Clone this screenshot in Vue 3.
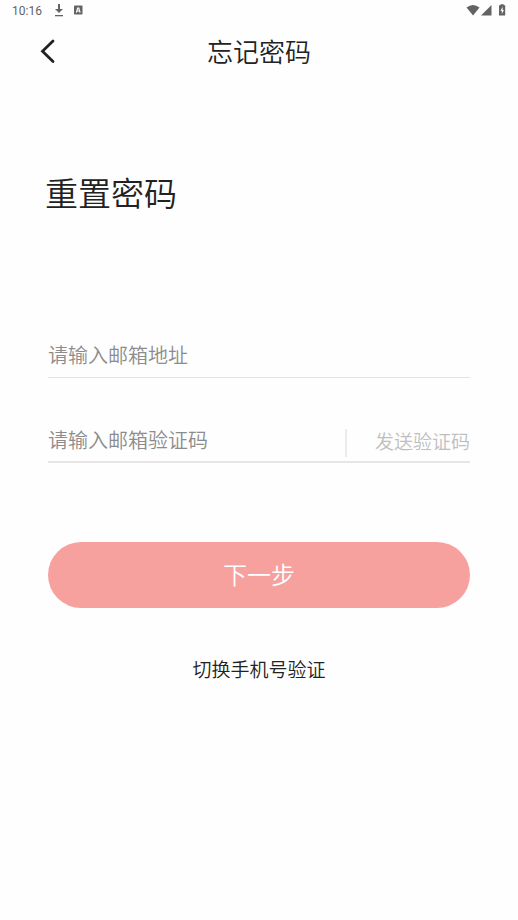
<script setup>
import { ref } from 'vue'

const email = ref('')
const code = ref('')
</script>

<template>
  <div class="screen">
    <div class="status">
      <span class="clock">10:16</span>
      <svg class="download" width="10" height="14" viewBox="0 0 10 14" aria-hidden="true">
        <path d="M4 1h2v5h3L5 10 1 6h3z" />
        <path d="M1 12h8v1.3H1z" />
      </svg>
      <svg class="badge" width="10" height="10" viewBox="0 0 10 10" aria-hidden="true">
        <rect x="1" y="0.5" width="8.5" height="9" rx="0.8" />
        <path d="M3.4 7.6 4.7 3h1.1l1.3 4.6M4 6h2.6" fill="none" stroke="#fff" stroke-width="1.2" />
      </svg>
      <svg class="signals" width="40" height="14" viewBox="0 0 40 14" aria-hidden="true">
        <path d="M0.5 4.6Q7 -0.8 13.5 4.6L7 12.6z" />
        <path d="M15 12.5 25.5 2v10.5z" />
        <path d="M34.5 1.2h3.2v1h1.5v10.4H33V2.2h1.5z" />
        <path d="M36.8 3.8 34.3 7.7h1.5v3.2L38 6.9h-1.4z" fill="#fff" />
      </svg>
    </div>

    <header class="bar">
      <button class="back" type="button" aria-label="返回">
        <svg width="16" height="26" viewBox="0 0 16 26" aria-hidden="true">
          <path d="M13 3 2.5 13.2 13 23.5" fill="none" stroke="#222" stroke-width="2.8" stroke-linecap="round" />
        </svg>
      </button>
      <h1 class="title">忘记密码</h1>
    </header>

    <main class="content">
      <h2 class="heading">重置密码</h2>
      <form class="form" @submit.prevent>
        <div class="field">
          <input v-model="email" class="input" type="email" placeholder="请输入邮箱地址" aria-label="请输入邮箱地址" />
        </div>
        <div class="field field-code">
          <input v-model="code" class="input" type="text" placeholder="请输入邮箱验证码" aria-label="请输入邮箱验证码" />
          <button class="send" type="button">发送验证码</button>
        </div>
        <button class="next" type="submit">下一步</button>
      </form>
      <a class="switch" href="#">切换手机号验证</a>
    </main>
  </div>
</template>

<style>
body {
  background: #fefefe;
}
</style>

<style scoped>
* {
  box-sizing: border-box;
}

.screen {
  min-height: 100vh;
  color: #222;
  font-family: "Noto Sans CJK SC", sans-serif;
  font-weight: 350;
}

.status {
  display: flex;
  align-items: center;
  height: 20px;
  padding: 0 12px;
  fill: #636363;
}

.clock {
  padding-top: 1px;
  color: #636363;
  font: 12px/20px Roboto, sans-serif;
}

.download {
  margin-left: 12px;
}

.badge {
  margin-left: 9px;
}

.signals {
  margin-left: auto;
}

.bar {
  display: grid;
  grid-template-columns: 1fr auto 1fr;
  align-items: center;
  height: 62px;
  padding: 0 40px;
}

button {
  padding: 0;
  border: 0;
  background: none;
  font-family: inherit;
  font-weight: inherit;
}

.back {
  display: flex;
  justify-self: start;
}

.title {
  margin: 0;
  font-size: 26px;
  font-weight: inherit;
  line-height: 40px;
}

.content {
  display: flex;
  flex-direction: column;
  padding: 86px 48px 0;
}

.heading {
  margin: 0 -3px;
  font-size: 33px;
  font-weight: inherit;
  line-height: 48px;
}

.form {
  display: flex;
  flex-direction: column;
  margin-top: 118px;
}

.field {
  display: flex;
  align-items: flex-start;
  height: 44px;
  border-bottom: 1px solid #e4e4e4;
}

.field-code {
  margin-top: 41px;
  border-bottom: 2px solid #e6e6e6;
}

.input {
  flex: 1;
  min-width: 0;
  height: 40px;
  padding: 0;
  border: 0;
  outline: none;
  background: none;
  color: #222;
  font-family: inherit;
  font-size: 20px;
  font-weight: inherit;
}

.input::placeholder {
  color: #8c8c8c;
  opacity: 1;
}

.send {
  height: 28px;
  margin-top: 10px;
  padding: 0 0 4px 28px;
  border-left: 2px solid #ebebeb;
  color: #bebebe;
  font-size: 19px;
  line-height: 24px;
}

.next {
  height: 66px;
  margin-top: 79px;
  padding-bottom: 4px;
  border-radius: 33px;
  background: #f7a19f;
  color: #fff;
  font-size: 24px;
}

.switch {
  align-self: center;
  margin-top: 47px;
  color: #222;
  font-size: 19px;
  line-height: 28px;
  text-decoration: none;
}
</style>
